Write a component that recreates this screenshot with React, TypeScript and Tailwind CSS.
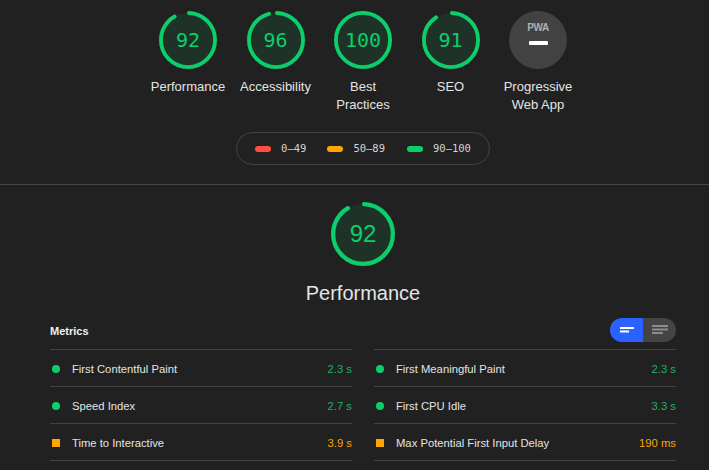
import React from 'react';

const GREEN = '#0cce6b';
const CIRC = 2 * Math.PI * 56;

type Score = { label: string[]; score: number };

const scores: Score[] = [
  { label: ['Performance'], score: 92 },
  { label: ['Accessibility'], score: 96 },
  { label: ['Best', 'Practices'], score: 100 },
  { label: ['SEO'], score: 91 },
];

const Gauge = ({ score, size }: { score: number; size: number }) => (
  <svg width={size} height={size} viewBox="0 0 120 120" className="block">
    <circle cx="60" cy="60" r="56" fill="rgba(12,206,107,0.1)" stroke="none" />
    <circle
      cx="60"
      cy="60"
      r="56"
      fill="none"
      stroke={GREEN}
      strokeWidth="8"
      strokeLinecap="round"
      strokeDasharray={`${(score / 100) * CIRC - 4} ${CIRC}`}
      transform="rotate(-90 60 60)"
      strokeDashoffset={-2}
    />
  </svg>
);

const leftMetrics = [
  { name: 'First Contentful Paint', value: '2.3 s', kind: 'pass' },
  { name: 'Speed Index', value: '2.7 s', kind: 'pass' },
  { name: 'Time to Interactive', value: '3.9 s', kind: 'average' },
];

const rightMetrics = [
  { name: 'First Meaningful Paint', value: '2.3 s', kind: 'pass' },
  { name: 'First CPU Idle', value: '3.3 s', kind: 'pass' },
  { name: 'Max Potential First Input Delay', value: '190 ms', kind: 'average' },
];

const MetricColumn = ({ items }: { items: typeof leftMetrics }) => (
  <div className="border-b border-[#424242]">
    {items.map((m) => (
      <div key={m.name} className="flex items-center h-[37px] pt-[2px] border-t border-[#424242] pl-[2px]">
        {m.kind === 'pass' ? (
          <span className="w-2 h-2 rounded-full bg-[#0cce6b]" />
        ) : (
          <span className="w-2 h-2 bg-[#ffa400]" />
        )}
        <span className="ml-3 text-[11.25px] text-[#e4e4e4]">{m.name}</span>
        <span
          className={
            m.kind === 'pass'
              ? 'ml-auto text-[11.25px] text-[#18b663]'
              : 'ml-auto text-[11.25px] text-[#ffa400]'
          }
        >
          {m.value}
        </span>
      </div>
    ))}
  </div>
);

export default function App() {
  return (
    <div
      className="w-[709px] h-[470px] overflow-hidden bg-[#212121] text-[#e4e4e4]"
      style={{ fontFamily: '"Liberation Sans", Arial, sans-serif' }}
    >
      {/* Score gauges */}
      <div className="ml-[50px] w-[626px] pt-[11px] flex flex-col items-center">
        <div className="flex">
          {scores.map((s) => (
            <div key={s.label.join()} className="w-[87.5px] flex flex-col items-center">
              <div className="relative w-[58px] h-[58px]">
                <Gauge score={s.score} size={58} />
                <div
                  className="absolute inset-0 flex items-center justify-center text-[20px] text-[#0cce6b]"
                  style={{ fontFamily: '"DejaVu Sans Mono", monospace' }}
                >
                  {s.score}
                </div>
              </div>
              <div className="mt-[9px] text-[13px] leading-[18px] text-center">
                {s.label.map((l) => (
                  <div key={l}>{l}</div>
                ))}
              </div>
            </div>
          ))}
          <div className="w-[87.5px] flex flex-col items-center">
            <div className="w-[58px] h-[58px] rounded-full bg-[#424242] flex flex-col items-center">
              <span className="mt-[12px] text-[10px] leading-[10px] font-bold tracking-[-0.5px] text-[#b0b0b0]">
                PWA
              </span>
              <span className="mt-[8px] w-[19px] h-[4px] rounded-[1px] bg-white" />
            </div>
            <div className="mt-[9px] text-[13px] leading-[18px] text-center">
              <div>Progressive</div>
              <div>Web App</div>
            </div>
          </div>
        </div>

        {/* Legend */}
        <div
          className="mt-[18px] h-[33px] inline-flex items-center px-[18px] rounded-full border border-[#444] text-[10.5px] text-[#d4d4d4]"
          style={{ fontFamily: '"DejaVu Sans Mono", monospace' }}
        >
          <span className="w-4 h-[6px] rounded-full bg-[#ff4e42]" />
          <span className="ml-[10px]">0–49</span>
          <span className="ml-[21px] w-4 h-[6px] rounded-full bg-[#ffa400]" />
          <span className="ml-[10px]">50–89</span>
          <span className="ml-[22px] w-4 h-[6px] rounded-full bg-[#0cce6b]" />
          <span className="ml-[10px]">90–100</span>
        </div>
      </div>

      <div className="mt-[19px] h-px bg-[#474747]" />

      {/* Performance section */}
      <div className="ml-[50px] w-[626px]">
        <div className="pt-[17px] flex flex-col items-center">
          <div className="relative w-[64px] h-[64px]">
            <Gauge score={92} size={64} />
            <div className="absolute inset-0 flex items-center justify-center text-[24px] text-[#0cce6b]">
              92
            </div>
          </div>
          <div className="mt-[15px] text-[20px] leading-[24px]">Performance</div>
        </div>

        <div className="mt-[13px] flex items-center justify-between h-[24px]">
          <span className="pt-[2px] text-[11px] font-bold text-[#f0f0f0]">Metrics</span>
          <div className="flex h-[24px] w-[66px] rounded-full overflow-hidden">
            <div className="w-1/2 bg-[#2962ff] flex items-center justify-center">
              <svg width="16" height="8" viewBox="0 0 16 8">
                <rect x="1" y="1" width="14" height="2" fill="#fff" />
                <rect x="1" y="4.5" width="9" height="2" fill="#fff" />
              </svg>
            </div>
            <div className="w-1/2 bg-[#444] flex items-center justify-center">
              <svg width="18" height="10" viewBox="0 0 18 10">
                <rect x="1" y="0" width="16" height="2" fill="#8c8c8c" />
                <rect x="1" y="3.5" width="16" height="2" fill="#8c8c8c" />
                <rect x="1" y="7" width="11" height="2" fill="#8c8c8c" />
              </svg>
            </div>
          </div>
        </div>

        <div className="mt-[7px] grid grid-cols-2 gap-x-[22px]">
          <MetricColumn items={leftMetrics} />
          <MetricColumn items={rightMetrics} />
        </div>
      </div>
    </div>
  );
}
